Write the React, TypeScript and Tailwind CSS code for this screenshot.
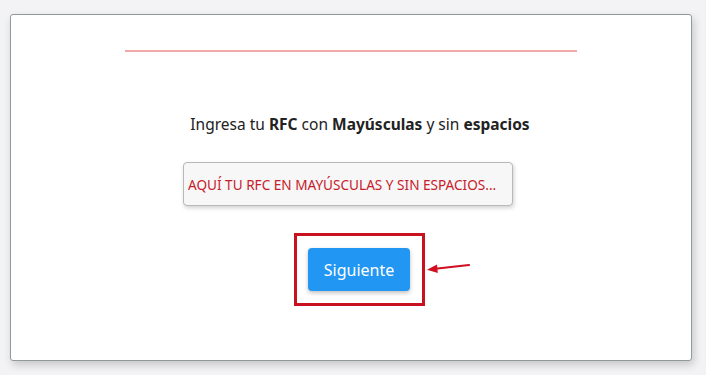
import React from "react";

export default function App() {
  return (
    <div className="w-[706px] h-[375px] bg-[#f3f3f5] pt-[14px] pl-[10px] overflow-hidden" style={{ fontFamily: '"Noto Sans", "Open Sans", sans-serif' }}>
      <div className="relative w-[682px] h-[347px] bg-white border border-[#8f9a9a] rounded-[3px] shadow-[2px_4px_8px_rgba(0,0,0,0.18)] flex flex-col items-center">
        <div className="mt-[35px] w-[452px] h-[2px] bg-[#f0a8a8]" />
        <p className="mt-[61px] ml-[18px] text-[15.5px] text-[#222] leading-[22px]">
          Ingresa tu <b className="font-bold">RFC</b> con <b className="font-bold">Mayúsculas</b> y sin <b className="font-bold">espacios</b>
        </p>
        <input
          readOnly
          placeholder="AQUÍ TU RFC EN MAYÚSCULAS Y SIN ESPACIOS..."
          className="mt-[27px] -ml-[6px] w-[330px] h-[44px] px-[4px] bg-[#f7f7f7] border border-[#b8b8b8] rounded-[4px] shadow-[1px_2px_4px_rgba(0,0,0,0.18)] text-[13.6px] placeholder:text-[#c8202a] outline-none"
        />
        <div className="relative mt-[27px] ml-[16px]">
          <div className="w-[131px] h-[73px] border-[3px] border-[#c9121f] flex items-center justify-center">
            <button className="w-[102px] h-[43px] bg-[#2196f3] rounded-[4px] text-white text-[16px] shadow-[0_2px_4px_rgba(0,0,0,0.25)]">
              Siguiente
            </button>
          </div>
          <svg width="46" height="14" viewBox="0 0 46 14" className="absolute left-[131px] top-[28px]">
            <path d="M44 4 L8 8" stroke="#d01020" strokeWidth="2.2" strokeLinecap="round" />
            <path d="M2 8.7 L12 3.5 L12.8 12 Z" fill="#d01020" />
          </svg>
        </div>
      </div>
    </div>
  );
}
